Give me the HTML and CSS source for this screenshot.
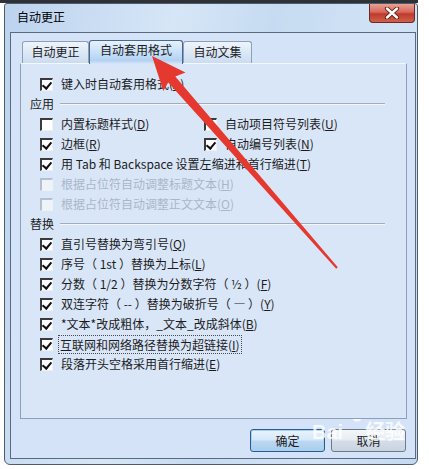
FILE: index.html
```html
<!DOCTYPE html>
<html lang="zh-CN">
<head>
<meta charset="utf-8">
<title>自动更正</title>
<link rel="stylesheet" href="styles.css">
</head>
<body>
<div class="topbar"></div>
<div class="window">
  <div class="titlebar">
    <span class="title">自动更正</span>
    <div class="close">
      <svg width="16" height="12" viewBox="0 0 16 12"><path d="M3 1.5 L13 10.5 M13 1.5 L3 10.5" stroke="#5a1a14" stroke-width="4.2" stroke-linecap="round"/><path d="M3 1.5 L13 10.5 M13 1.5 L3 10.5" stroke="#fff" stroke-width="2.4" stroke-linecap="round"/></svg>
    </div>
  </div>
  <div class="client">
    <div class="tabs">
      <div class="tab t1">自动更正</div>
      <div class="tab t2 active">自动套用格式</div>
      <div class="tab t3">自动文集</div>
    </div>
    <div class="panel">
      <div class="row"><span class="cb on"></span><span>键入时自动套用格式(<u>A</u>)</span></div>
      <div class="heading"><span>应用</span><i class="rule"></i></div>
      <div class="row two">
        <div class="col"><span class="cb"></span><span>内置标题样式(<u>D</u>)</span></div>
        <div class="col"><span class="cb"></span><span>自动项目符号列表(<u>U</u>)</span></div>
      </div>
      <div class="row two">
        <div class="col"><span class="cb on"></span><span>边框(<u>R</u>)</span></div>
        <div class="col"><span class="cb on"></span><span>自动编号列表(<u>N</u>)</span></div>
      </div>
      <div class="row"><span class="cb on"></span><span>用 Tab 和 Backspace 设置左缩进和首行缩进(<u>T</u>)</span></div>
      <div class="row off"><span class="cb"></span><span>根据占位符自动调整标题文本(<u>H</u>)</span></div>
      <div class="row off"><span class="cb"></span><span>根据占位符自动调整正文文本(<u>O</u>)</span></div>
      <div class="heading"><span>替换</span><i class="rule"></i></div>
      <div class="row"><span class="cb on"></span><span>直引号替换为弯引号(<u>Q</u>)</span></div>
      <div class="row"><span class="cb on"></span><span>序号（ 1st ）替换为上标(<u>L</u>)</span></div>
      <div class="row"><span class="cb on"></span><span>分数（ 1/2 ）替换为分数字符（ ½ ）(<u>F</u>)</span></div>
      <div class="row"><span class="cb on"></span><span>双连字符（ -- ）替换为破折号（ — ）(<u>Y</u>)</span></div>
      <div class="row"><span class="cb on"></span><span>*文本*改成粗体，_文本_改成斜体(<u>B</u>)</span></div>
      <div class="row"><span class="cb on"></span><span class="focus">互联网和网络路径替换为超链接(<u>I</u>)</span></div>
      <div class="row"><span class="cb on"></span><span>段落开头空格采用首行缩进(<u>E</u>)</span></div>
    </div>
    <div class="buttons">
      <button class="btn default">确定</button>
      <button class="btn">取消</button>
    </div>
  </div>
</div>
<div class="watermark">
  <svg class="paw" width="22" height="16" viewBox="0 0 22 16"><circle cx="4" cy="6" r="2.2" fill="#fff"/><circle cx="9" cy="2.5" r="2.2" fill="#fff"/><circle cx="14" cy="2.5" r="2.2" fill="#fff"/><circle cx="18.5" cy="6" r="2.2" fill="#fff"/><ellipse cx="11" cy="11.5" rx="5" ry="4" fill="#fff"/></svg>
  <span class="wm-text">Bai<span class="wm-gap"></span>经验</span>
</div>
<svg class="arrow" width="429" height="469" viewBox="0 0 429 469">
  <path d="M152 56 L185.5 72.5 L175.3 76.5 L337.8 267.3 L336.2 268.7 L168.2 82.5 L163.3 91 Z" fill="#e5392f"/>
</svg>
</body>
</html>
```

FILE: styles.css
```css
* { box-sizing: border-box; }
body {
  margin: 0;
  width: 429px;
  height: 469px;
  background: #fff;
  position: relative;
  overflow: hidden;
  font-family: "Noto Sans CJK SC", "Noto Sans", sans-serif;
  font-size: 12px;
  color: #1c1c1c;
}
.topbar {
  width: 418px;
  height: 3px;
  background: #2e3238;
}
.window {
  margin-left: 4px;
  width: 414px;
  height: 462px;
  border: 1px solid #4f5c6c;
  border-radius: 3px 3px 6px 6px;
  background: linear-gradient(100deg, #bcd3ee 0%, #d6e6f7 35%, #c6dbf1 55%, #d2e3f6 80%, #c4d9f1 100%);
  padding: 0 1px 5px 5px;
  display: flex;
  flex-direction: column;
}
.titlebar {
  height: 28px;
  display: flex;
  align-items: flex-start;
}
.title {
  padding: 6px 0 0 7px;
  line-height: 14px;
  font-size: 12px;
  color: #000;
}
.close {
  margin-left: auto;
  margin-right: 1px;
  width: 46px;
  height: 19px;
  border: 1px solid #6a2a22;
  border-top: none;
  border-radius: 0 0 4px 4px;
  background: linear-gradient(#e8a294 0%, #d7675a 45%, #bd3b2d 55%, #d0614a 100%);
  display: flex;
  align-items: center;
  justify-content: center;
}
.client {
  flex: 1;
  border: 1px solid #5a6a7e;
  background: #d4e3f7;
  padding: 7px 8px 6px 9px;
  display: flex;
  flex-direction: column;
}
.tabs {
  height: 24px;
  display: flex;
  align-items: flex-end;
  padding-left: 2px;
  position: relative;
  z-index: 2;
}
.tab {
  height: 22px;
  margin-bottom: 1px;
  border: 1px solid #8c9fb8;
  border-bottom: none;
  border-radius: 3px 3px 0 0;
  background: linear-gradient(#eef4fb, #cbdcf1);
  text-align: center;
  line-height: 20px;
  color: #1c1c1c;
}
.t1 { width: 67px; }
.t2 { width: 94px; }
.t3 { width: 69px; }
.tab.active {
  height: 24px;
  margin-bottom: 0;
  border-color: #46698f;
  background: linear-gradient(#e6f1fc 0%, #c8e0f8 50%, #b2d2f3 85%, #d9e6f8 100%);
  line-height: 18px;
}
.panel {
  margin-top: -1px;
  height: 356px;
  border: 1px solid #8fa0b6;
  border-top-color: #f3f8fe;
  background: #d9e6f8;
  padding-top: 10px;
  position: relative;
  z-index: 1;
}
.row {
  height: 20px;
  display: flex;
  align-items: center;
  padding-left: 19px;
  line-height: 20px;
  white-space: nowrap;
}
.col {
  display: flex;
  align-items: center;
}
.col:first-child { width: 164px; }
.cb {
  width: 13px;
  height: 13px;
  flex: none;
  margin-right: 8px;
  background: #fff;
  border-top: 2px solid #3a3a3a;
  border-left: 2px solid #3a3a3a;
  border-right: 1px solid #eef2f7;
  border-bottom: 1px solid #eef2f7;
  position: relative;
}
.cb.on::after {
  content: "";
  position: absolute;
  left: 2px;
  top: 0px;
  width: 4px;
  height: 7px;
  border-right: 2px solid #111;
  border-bottom: 2px solid #111;
  transform: rotate(40deg);
}
.row.off { color: #a9b6c8; }
.row.off .cb {
  border-top-color: #b4c0cf;
  border-left-color: #b4c0cf;
  background: #eef3fa;
}
.focus {
  outline: 1px dotted #4a4a4a;
  line-height: 17px;
  padding: 0 1px;
  margin-left: -2px;
}
.heading {
  height: 20px;
  display: flex;
  align-items: center;
  padding-left: 9px;
  padding-right: 21px;
  line-height: 20px;
}
.rule {
  flex: 1;
  margin-left: 6px;
  height: 2px;
  background: #a2acbb;
  border-bottom: 1px solid #f2f6fb;
  background-clip: content-box;
}
.buttons {
  margin-top: 10px;
  display: flex;
  justify-content: flex-end;
  gap: 6px;
  padding-right: 1px;
}
.btn {
  width: 75px;
  height: 23px;
  font-family: "Noto Sans CJK SC", sans-serif;
  font-size: 12px;
  color: #1c1c1c;
  border: 1px solid #6e7a88;
  border-radius: 3px;
  background: linear-gradient(#f3f6fa 0%, #e6ecf3 48%, #d4dde8 52%, #c9d4e1 100%);
  padding: 0;
  line-height: 20px;
}
.btn.default {
  border-color: #2d5b8f;
  box-shadow: inset 0 0 0 1px #a7d3f3;
  background: linear-gradient(#e9f3fc 0%, #d6e8f8 48%, #bcd8f1 52%, #a9cdee 100%);
}
.watermark {
  position: absolute;
  left: 312px;
  top: 404px;
  width: 100px;
  height: 50px;
  pointer-events: none;
  opacity: 0.8;
}
.paw {
  position: absolute;
  left: 34px;
  top: 2px;
}
.wm-text {
  position: absolute;
  left: 0;
  top: 16px;
  display: flex;
  align-items: center;
  font-family: "Liberation Sans", "Noto Sans CJK SC", sans-serif;
  font-size: 20px;
  font-weight: bold;
  line-height: 24px;
  white-space: nowrap;
  color: #fff;
}
.wm-gap { display: inline-block; width: 22px; }
.arrow {
  position: absolute;
  left: 0;
  top: 0;
  pointer-events: none;
  z-index: 10;
}
```
